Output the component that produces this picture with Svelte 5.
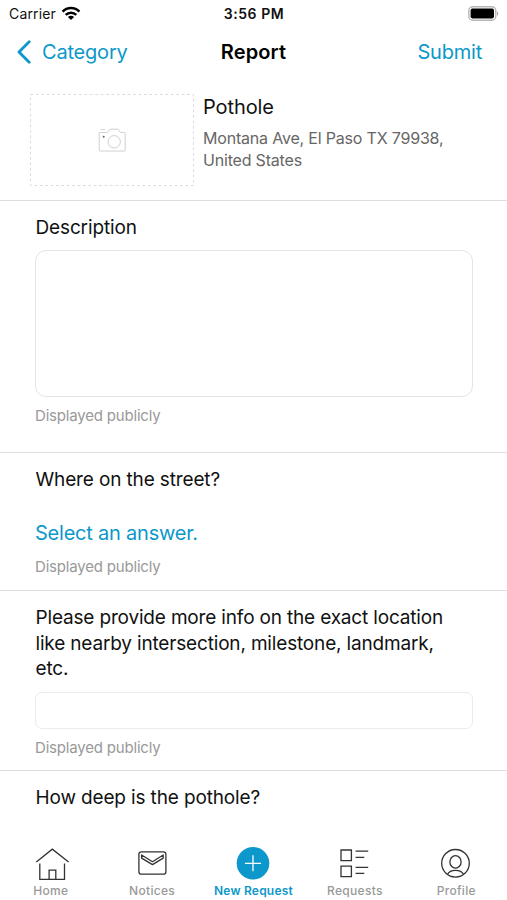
<!-- App.svelte - Service request report form -->
<script lang="ts">
  interface Tab {
    id: string;
    label: string;
  }

  const tabs: Tab[] = [
    { id: 'home', label: 'Home' },
    { id: 'notices', label: 'Notices' },
    { id: 'new', label: 'New Request' },
    { id: 'requests', label: 'Requests' },
    { id: 'profile', label: 'Profile' },
  ];

  let activeTab = $state('new');
  let description = $state('');
  let location = $state('');
</script>

<div class="screen">
  <div class="status-bar">
    <div class="carrier">
      <span>Carrier</span>
      <svg width="20" height="15" viewBox="0 0 20 15" fill="none" stroke="#000" stroke-width="2.5">
        <path d="M1.6 5.6C6.3 .8 13.7 .8 18.4 5.6" />
        <path d="M4.7 8.9C7.7 5.9 12.3 5.9 15.3 8.9" />
        <path d="M10 14L6.9 10.9C8.7 9.2 11.3 9.2 13.1 10.9Z" fill="#000" stroke="none" />
      </svg>
    </div>
    <span class="clock">3:56 PM</span>
    <div class="battery">
      <svg width="31" height="15" viewBox="0 0 31 15">
        <rect x=".8" y=".8" width="27" height="13.4" rx="4" fill="#fff" stroke="#b5b5b5" stroke-width="1.4" />
        <rect x="2.6" y="2.6" width="23.4" height="9.8" rx="1.8" fill="#000" />
        <path d="M29 5.2C30.8 6 30.8 9 29 9.8Z" fill="#a8a8a8" />
      </svg>
    </div>
  </div>

  <header class="nav-bar">
    <button class="nav-link back">
      <svg width="15" height="24" viewBox="0 0 15 24" fill="none" stroke="currentColor" stroke-width="2.8" stroke-linecap="round" stroke-linejoin="round">
        <path d="M13.2 1.8L3 12L13.2 22.2" />
      </svg>
      <span>Category</span>
    </button>
    <h1>Report</h1>
    <button class="nav-link submit">Submit</button>
  </header>

  <main>
    <section class="summary">
      <button class="photo" aria-label="Add photo">
        <svg class="photo-frame" width="164" height="92" viewBox="0 0 164 92" fill="none">
          <rect x=".5" y=".5" width="163" height="91" stroke="#dcdcdc" stroke-dasharray="2.7 2.7" />
          <g transform="translate(67.7 33)" stroke="#d0d0d0">
            <path d="M1.5 5.5H9.5L12.2 2.2H20.3L23 5.5H26.5Q27.5 5.5 27.5 6.5V23Q27.5 24 26.5 24H2.5Q1.5 24 1.5 23Z" />
            <path d="M3 2.5H7.5" />
            <circle cx="16.5" cy="14.8" r="6.2" />
            <circle cx="6" cy="9.7" r="1" fill="#666" stroke="none" />
          </g>
        </svg>
      </button>
      <div class="summary-copy">
        <h2>Pothole</h2>
        <p>Montana Ave, El Paso TX 79938,<br />United States</p>
      </div>
    </section>

    <section class="field description">
      <label for="description">Description</label>
      <textarea id="description" bind:value={description}></textarea>
      <p class="hint">Displayed publicly</p>
    </section>

    <section class="field street">
      <h3>Where on the street?</h3>
      <button class="select">Select an answer.</button>
      <p class="hint">Displayed publicly</p>
    </section>

    <section class="field location">
      <label for="location">Please provide more info on the exact location<br />like nearby intersection, milestone, landmark,<br />etc.</label>
      <input id="location" type="text" bind:value={location} />
      <p class="hint">Displayed publicly</p>
    </section>

    <section class="field depth">
      <h3>How deep is the pothole?</h3>
    </section>
  </main>

  <nav class="tab-bar">
    {#each tabs as tab}
      <button class="tab" class:active={activeTab === tab.id} onclick={() => (activeTab = tab.id)}>
        <svg width="34" height="34" viewBox="0 0 34 34" fill="none" stroke="#333" stroke-width="1.3">
          {#if tab.id === 'home'}
            <path d="M2.3 17L18.3 4.2L34.6 17" />
            <path d="M5.8 18.6V34.3H30.5V18.6" />
            <path d="M15.1 34V25.2H21.8V34" />
          {:else if tab.id === 'notices'}
            <rect x="3.9" y="6.8" width="27" height="22.4" rx="2.5" />
            <path d="M6.6 10L17.5 16.7L28.2 10V13.1L17.5 19.6L6.6 13.1Z" stroke-linejoin="round" />
          {:else if tab.id === 'new'}
            <circle cx="17" cy="18.3" r="16.3" fill="#0c98ca" stroke="none" />
            <path d="M17 10.3V26.3M9 18.3H25" stroke="#fff" />
          {:else if tab.id === 'requests'}
            <path d="M3 5H13.4V15.6H3ZM3 21.2H13.4V31.6H3Z" />
            <path d="M17.6 6.1H30.2M17.6 12.4H26.3M17.6 22.4H30.2M17.6 28.3H26.3" />
          {:else}
            <circle cx="16.5" cy="18.3" r="13.8" />
            <ellipse cx="16.5" cy="16.9" rx="5.6" ry="6.2" />
            <path d="M8.6 29.2C11 24 22 24 24.4 29.2" />
          {/if}
        </svg>
        <span>{tab.label}</span>
      </button>
    {/each}
  </nav>
</div>

<style>
  :global(body) {
    margin: 0;
    background: #fff;
  }

  .screen {
    display: flex;
    flex-direction: column;
    box-sizing: border-box;
    width: 507px;
    height: 900px;
    overflow: hidden;
    background: #fff;
    color: #111;
    font-family: Inter, 'Liberation Sans', sans-serif;
  }

  button {
    margin: 0;
    padding: 0;
    border: 0;
    background: none;
    color: inherit;
    font: inherit;
    letter-spacing: inherit;
    cursor: pointer;
  }

  h1,
  h2,
  h3,
  p {
    margin: 0;
    font-weight: 400;
  }

  .status-bar,
  .nav-bar {
    display: grid;
    grid-template-columns: 1fr auto 1fr;
    align-items: center;
    flex: none;
  }

  .status-bar {
    height: 27px;
    padding: 0 8px 0 9px;
    font-size: 14px;
    color: #111;
  }

  .carrier {
    display: flex;
    align-items: center;
    gap: 5px;
    letter-spacing: 0.15px;
  }

  .clock {
    font-weight: 600;
    letter-spacing: 0.55px;
  }

  .battery {
    display: flex;
    justify-content: flex-end;
  }

  .nav-bar {
    height: 50px;
    margin-bottom: 1px;
    padding: 0 25px;
    font-size: 20px;
  }

  .nav-bar h1 {
    font-size: 20px;
    font-weight: 600;
    letter-spacing: 0.15px;
    color: #000;
  }

  .nav-link {
    color: #0c98ca;
    letter-spacing: -0.2px;
  }

  .back {
    display: flex;
    align-items: center;
    gap: 11px;
    margin-left: -9px;
  }

  .submit {
    justify-self: end;
  }

  main {
    flex: 1;
    min-height: 0;
    overflow: hidden;
  }

  .summary {
    display: flex;
    box-sizing: border-box;
    height: 123px;
    padding: 16px 30px 0;
    gap: 9px;
    border-bottom: 1px solid #dedede;
  }

  .photo {
    width: 164px;
    height: 92px;
    flex: none;
  }

  .photo-frame {
    display: block;
  }

  .summary-copy h2 {
    padding-top: 1px;
    font-size: 20px;
    line-height: 25px;
    letter-spacing: -0.1px;
  }

  .summary-copy p {
    margin-top: 7px;
    color: #666;
    font-size: 16px;
    line-height: 22px;
    letter-spacing: -0.19px;
  }

  .field {
    display: flex;
    flex-direction: column;
    align-items: flex-start;
    box-sizing: border-box;
    padding: 0 34px 0 35px;
    border-bottom: 1px solid #dedede;
  }

  .field label,
  .field h3 {
    padding-left: 0.5px;
    font-size: 19px;
    line-height: 25.7px;
    letter-spacing: -0.14px;
  }

  .hint {
    color: #999;
    font-size: 15px;
    line-height: 20px;
    letter-spacing: -0.19px;
  }

  textarea,
  input {
    display: block;
    box-sizing: border-box;
    width: 438px;
    border: 1px solid #e4e4e4;
    background: #fff;
    outline: none;
    resize: none;
    font: inherit;
  }

  textarea {
    height: 147px;
    margin: 9px 0 9px;
    border-radius: 11px;
  }

  input {
    height: 37px;
    margin: 10px 0 9px;
    border-radius: 7px;
    border-color: #ebebeb;
  }

  .description {
    height: 252px;
    padding-top: 14px;
  }

  .street {
    height: 138px;
    padding-top: 14px;
  }

  .select {
    margin: 27px 0 11px;
    color: #0c98ca;
    font-size: 20px;
    line-height: 26px;
    letter-spacing: -0.22px;
  }

  .location {
    height: 180px;
    padding-top: 14px;
  }

  .location label {
    letter-spacing: -0.17px;
  }

  .depth {
    padding-top: 14px;
    border-bottom: 0;
  }

  .tab-bar {
    display: grid;
    grid-template-columns: repeat(5, 1fr);
    flex: none;
    height: 55px;
    background: #fff;
  }

  .tab {
    display: flex;
    flex-direction: column;
    align-items: center;
    gap: 4px;
    color: #999;
    font-size: 12px;
    font-weight: 500;
    line-height: 16px;
    letter-spacing: 0.3px;
    white-space: nowrap;
  }

  .tab svg {
    overflow: visible;
  }

  .tab.active {
    color: #0c98ca;
    font-weight: 600;
    letter-spacing: 0.2px;
  }
</style>
